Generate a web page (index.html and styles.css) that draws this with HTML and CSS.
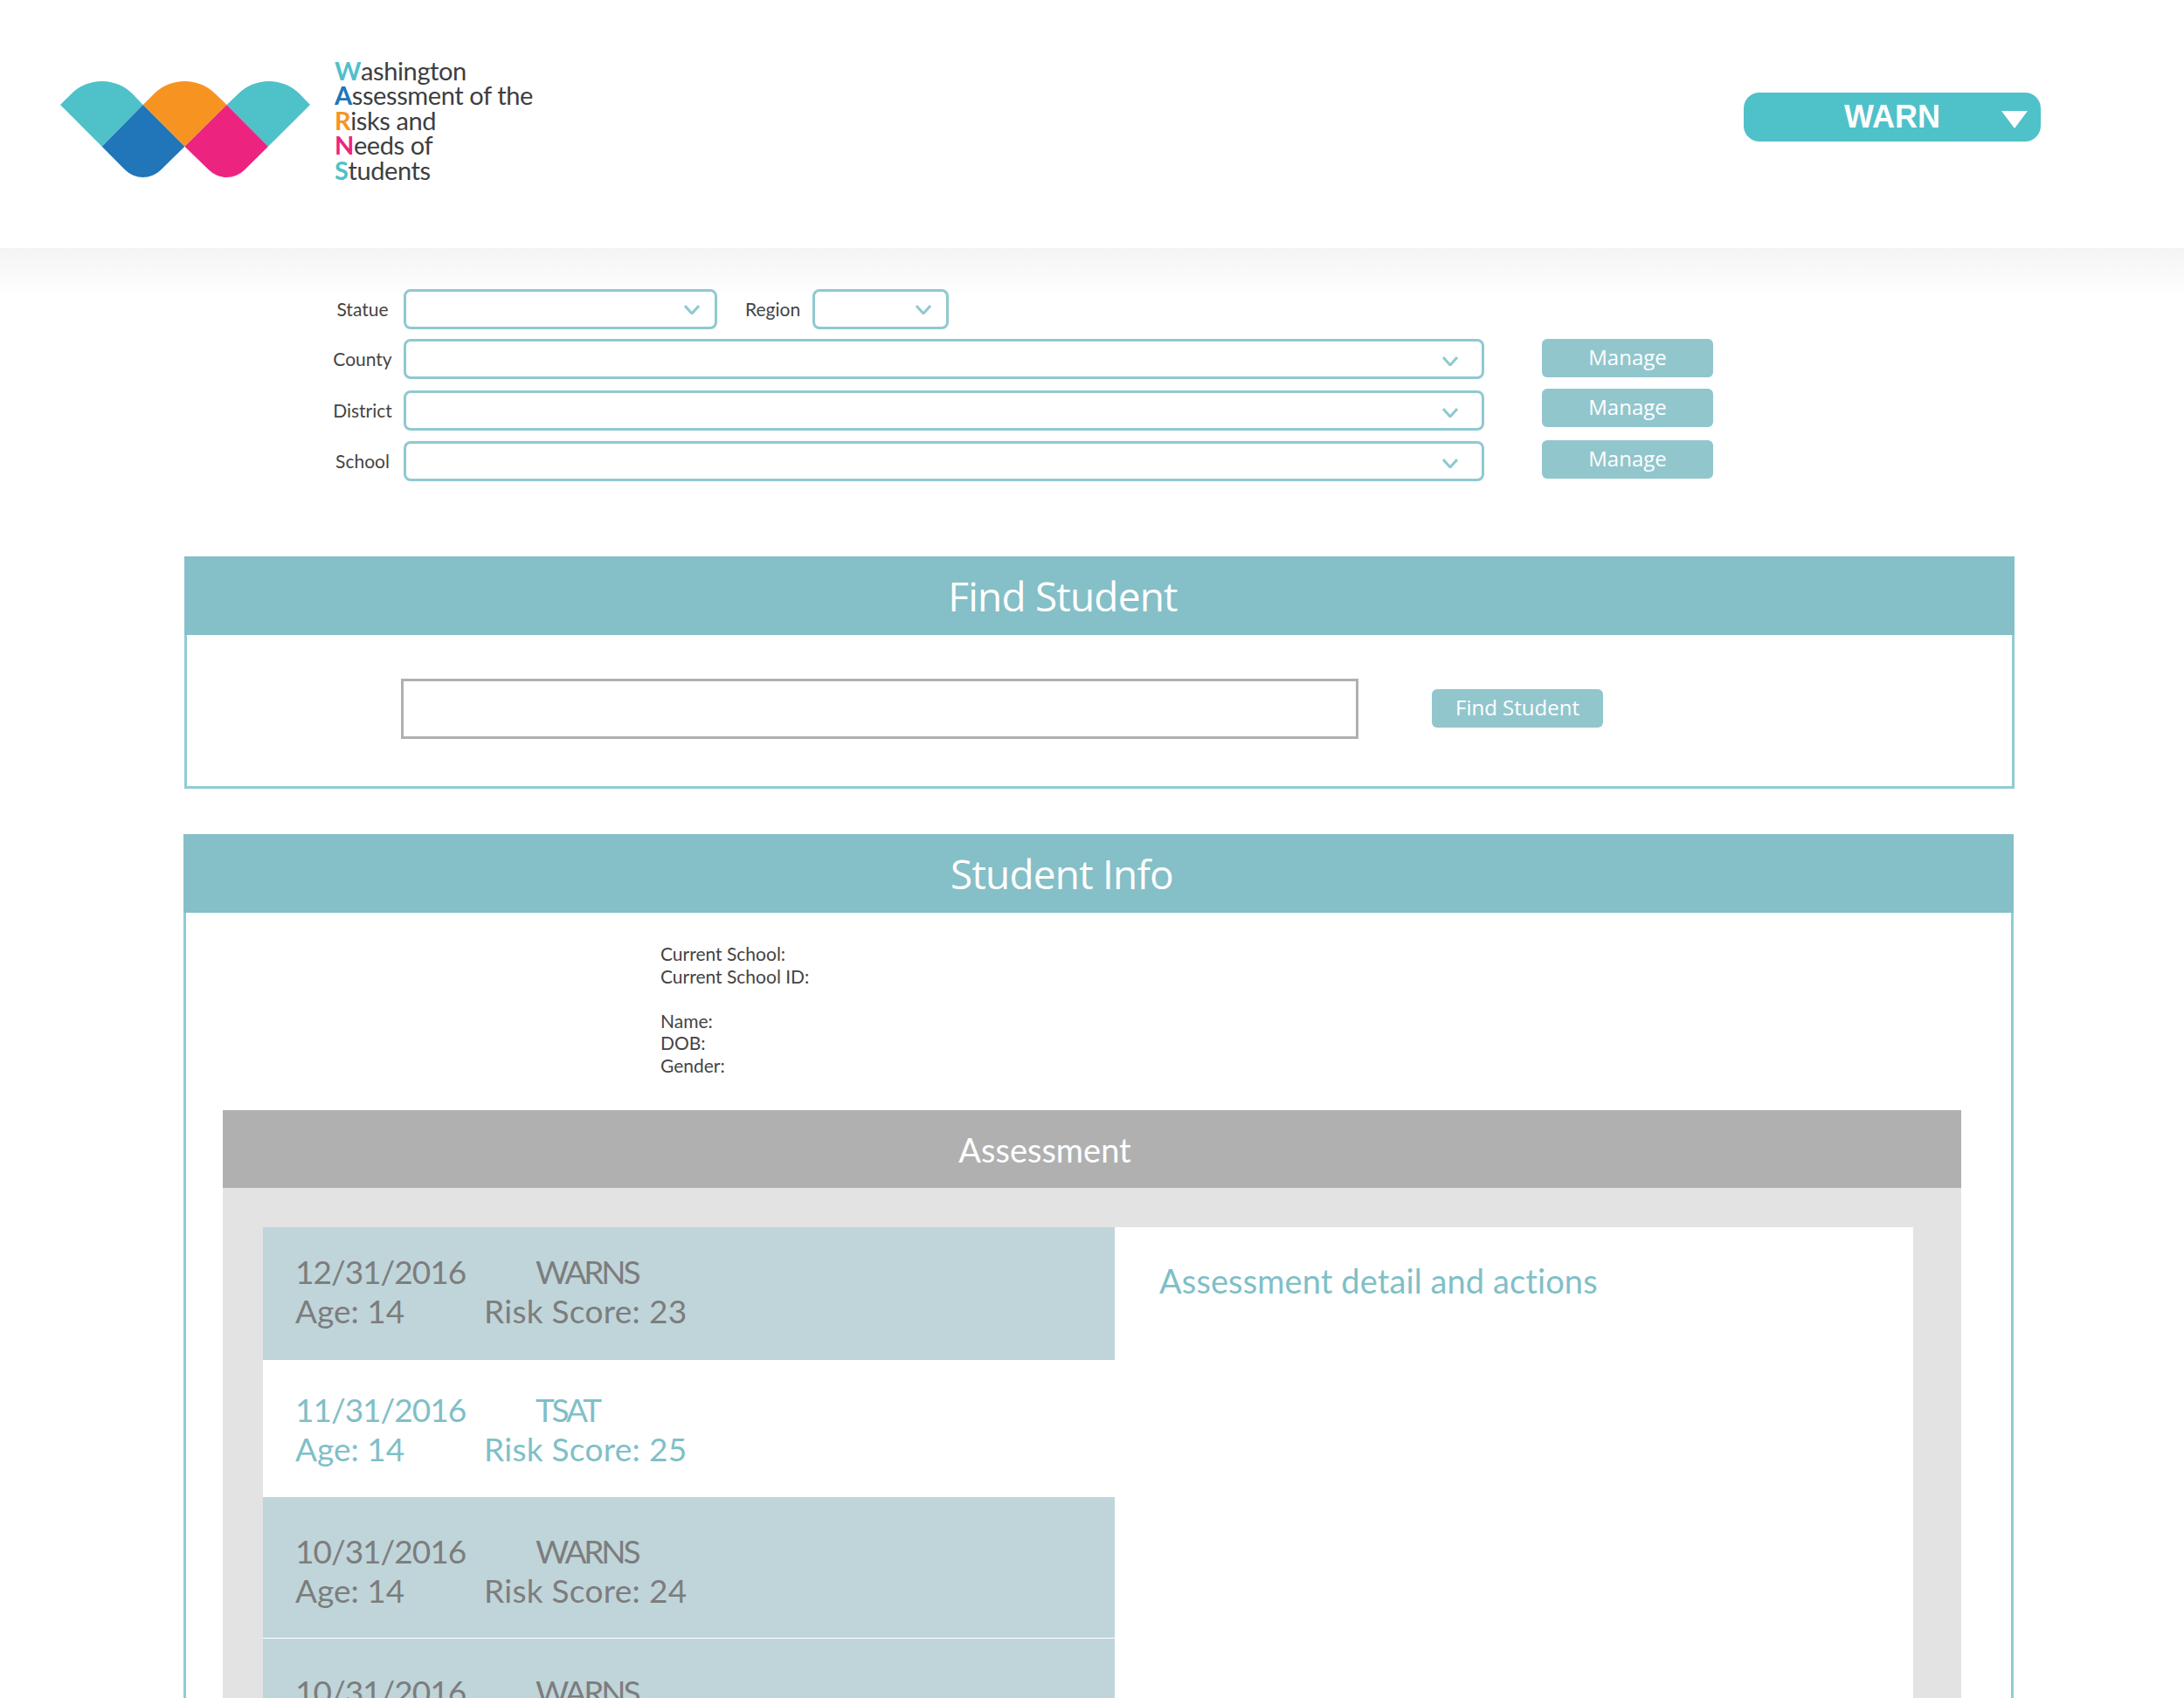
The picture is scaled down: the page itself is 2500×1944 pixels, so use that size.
FILE: index.html
```html
<!DOCTYPE html>
<html lang="en">

<head>
    <title>WARNS</title>
    <meta charset="UTF-8">
    <link rel="stylesheet" href="styles.css">
</head>

<body>
    <header class="top">
        <div class="brand">
            <svg class="brand-mark" viewBox="68 92 288 112" width="288" height="112">
                <path fill="#4fc1c9" d="M69 120L81.3 107.7A50 50 0 0 1 152 107.7L163.7 120L116.7 167.7Z" />
                <path fill="#f79421" d="M163.7 120L176 107.7A50 50 0 0 1 246.8 107.7L259.6 120L211.4 167.7Z" />
                <path fill="#4fc1c9" d="M259.6 120L272.4 107.7A50 50 0 0 1 343.2 107.7L355 120L307 167.7Z" />
                <path fill="#2175b9" d="M163.7 120L211.4 167.7L184.2 194.5A29 29 0 0 1 143.2 194.5L116.7 167.7Z" />
                <path fill="#ec2480" d="M259.6 120L307 167.7L280 194.5A29 29 0 0 1 239 194.5L211.4 167.7Z" />
            </svg>
            <div class="brand-name">
                <div><b class="cyan">W</b>ashington</div>
                <div><b class="blue">A</b>ssessment of the</div>
                <div><b class="orange">R</b>isks and</div>
                <div><b class="pink">N</b>eeds of</div>
                <div><b class="cyan">S</b>tudents</div>
            </div>
        </div>
        <div class="app-switch">
            WARN
            <span class="app-switch-arrow"></span>
        </div>
    </header>

    <section class="filters">
        <div class="filter-row">
            <label class="filter-label">Statue</label>
            <div class="picker picker-state">
                <svg class="chevron" viewBox="0 0 18 11"><path d="M1 1L9 10L17 1" /></svg>
            </div>
            <label class="filter-label-inline">Region</label>
            <div class="picker picker-region">
                <svg class="chevron" viewBox="0 0 18 11"><path d="M1 1L9 10L17 1" /></svg>
            </div>
        </div>
        <div class="filter-row filter-row-county">
            <label class="filter-label">County</label>
            <div class="picker picker-wide">
                <svg class="chevron" viewBox="0 0 18 11"><path d="M1 1L9 10L17 1" /></svg>
            </div>
            <button class="btn btn-manage">Manage</button>
        </div>
        <div class="filter-row filter-row-district">
            <label class="filter-label">District</label>
            <div class="picker picker-wide">
                <svg class="chevron" viewBox="0 0 18 11"><path d="M1 1L9 10L17 1" /></svg>
            </div>
            <button class="btn btn-manage">Manage</button>
        </div>
        <div class="filter-row filter-row-school">
            <label class="filter-label">School</label>
            <div class="picker picker-wide">
                <svg class="chevron" viewBox="0 0 18 11"><path d="M1 1L9 10L17 1" /></svg>
            </div>
            <button class="btn btn-manage">Manage</button>
        </div>
    </section>

    <section class="panel panel-find">
        <h2 class="panel-title">Find Student</h2>
        <div class="find-body">
            <div class="find-input"></div>
            <button class="btn btn-find">Find Student</button>
        </div>
    </section>

    <section class="panel panel-info">
        <h2 class="panel-title">Student Info</h2>
        <div class="info-text">
            <div>Current School:</div>
            <div>Current School ID:</div>
            <br>
            <div>Name:</div>
            <div>DOB:</div>
            <div>Gender:</div>
        </div>
        <div class="assessment">
            <h3 class="assessment-title">Assessment</h3>
            <div class="assessment-body">
                <div class="assessment-list">
                    <div class="item item-one">
                        <div class="item-line"><span class="item-date">12/31/2016</span><span class="item-type">WARNS</span></div>
                        <div class="item-line"><span class="item-age">Age: 14</span><span class="item-score">Risk Score: 23</span></div>
                    </div>
                    <div class="item item-active">
                        <div class="item-line"><span class="item-date">11/31/2016</span><span class="item-type">TSAT</span></div>
                        <div class="item-line"><span class="item-age">Age: 14</span><span class="item-score">Risk Score: 25</span></div>
                    </div>
                    <div class="item item-three">
                        <div class="item-line"><span class="item-date">10/31/2016</span><span class="item-type">WARNS</span></div>
                        <div class="item-line"><span class="item-age">Age: 14</span><span class="item-score">Risk Score: 24</span></div>
                    </div>
                    <div class="item item-four">
                        <div class="item-line"><span class="item-date">10/31/2016</span><span class="item-type">WARNS</span></div>
                        <div class="item-line"><span class="item-age">Age: 14</span><span class="item-score">Risk Score: 24</span></div>
                    </div>
                </div>
                <div class="assessment-detail">Assessment detail and actions</div>
            </div>
        </div>
    </section>
</body>

</html>
```

FILE: styles.css
```css
html, body {
    height: 1944px;
    overflow: hidden;
}

body {
    margin: 0;
    background: #fff;
    color: #444;
    font-family: "Lato", "Open Sans", sans-serif;
}

h2, h3 {
    margin: 0;
    font-weight: normal;
}

/* top bar */
.top {
    height: 284px;
    box-sizing: border-box;
    display: flex;
    justify-content: space-between;
    padding: 67px 164px 0 68px;
}

.brand {
    display: flex;
    align-items: flex-start;
}

.brand-mark {
    margin-top: 25px;
}

.brand-name {
    margin-left: 27px;
    font-size: 29px;
    letter-spacing: -.4px;
    line-height: 28.4px;
    color: #3e3e3f;
}

.cyan { color: #4fc1c9; }
.blue { color: #2175b9; }
.orange { color: #f79421; }
.pink { color: #ec2480; }

.app-switch {
    position: relative;
    width: 340px;
    height: 56px;
    margin-top: 39px;
    border-radius: 18px;
    background: #4fc1c9;
    color: #fff;
    font: bold 36px/56px "Liberation Sans", sans-serif;
    text-align: center;
}

.app-switch-arrow {
    position: absolute;
    right: 15px;
    top: 21px;
    border-left: 15px solid transparent;
    border-right: 15px solid transparent;
    border-top: 20px solid #fff;
}

/* filters */
.filters {
    height: 353px;
    box-sizing: border-box;
    padding: 47px 0 0 380px;
    background: linear-gradient(#f4f4f4, #fff 56px);
}

.filter-row {
    display: flex;
    align-items: flex-start;
}

.filter-row-county { margin-top: 11px; }
.filter-row-district { margin-top: 13px; }
.filter-row-school { margin-top: 12px; }

.filter-label {
    width: 70px;
    margin-right: 12px;
    font-size: 21px;
    line-height: 46px;
    text-align: center;
}

.filter-label-inline {
    margin: 0 14px 0 32px;
    font-size: 21px;
    line-height: 46px;
}

.picker {
    height: 46px;
    box-sizing: border-box;
    border: 3px solid #8fc9d1;
    border-radius: 8px;
    background: #fff;
    display: flex;
    align-items: center;
    justify-content: flex-end;
}

.picker-state {
    width: 359px;
    padding-right: 17px;
}

.picker-region {
    width: 156px;
    padding-right: 17px;
}

.picker-wide {
    width: 1237px;
    padding-right: 27px;
}

.picker-wide .chevron {
    margin-top: 4px;
}

.chevron {
    width: 18px;
    height: 11px;
    fill: none;
    stroke: #8fc9d1;
    stroke-width: 3;
}

.btn {
    width: 196px;
    height: 44px;
    padding: 0 0 3px;
    border: 0;
    border-radius: 6px;
    background: #92c6cd;
    color: #fff;
    font-family: "Open Sans", sans-serif;
    font-size: 24px;
}

.btn-manage {
    margin-left: 66px;
}

.btn-find {
    margin-bottom: 2px;
}

.filter-row-district .btn-manage { margin-top: -2px; }
.filter-row-school .btn-manage { margin-top: -1px; }

/* panels */
.panel {
    box-sizing: border-box;
    width: 2095px;
    margin-left: 211px;
    border: 3px solid #8fccd4;
    border-top: 0;
}

.panel-title {
    margin: 0 -3px;
    height: 90px;
    padding-right: 84px;
    background: #85bfc7;
    color: #fff;
    font-family: "Open Sans", sans-serif;
    font-size: 46px;
    letter-spacing: -.8px;
    line-height: 90px;
    text-align: center;
}

.panel-find {
    height: 266px;
}

.find-body {
    display: flex;
    align-items: center;
    padding: 50px 0 0 245px;
}

.find-input {
    width: 1096px;
    height: 69px;
    box-sizing: border-box;
    border: 3px solid #b0b0b0;
    margin-right: 84px;
}

.panel-info {
    margin-top: 52px;
    margin-left: 210px;
    height: 1100px;
}

.info-text {
    padding: 34px 0 0 543px;
    font-size: 21px;
    line-height: 25.6px;
}

.assessment {
    margin: 38px 0 0 42px;
    width: 1990px;
}

.assessment-title {
    height: 89px;
    padding-right: 108px;
    background: #b0b0b0;
    color: #fff;
    font-size: 38px;
    line-height: 90px;
    text-align: center;
}

.assessment-body {
    display: flex;
    padding: 45px 55px 0 46px;
    background: #e3e3e3;
    height: 600px;
}

.assessment-list {
    width: 975px;
    background: #fff;
}

.assessment-detail {
    flex: 1;
    padding: 38px 0 0 51px;
    background: #fff;
    color: #7fbfc8;
    font-size: 38px;
    letter-spacing: .1px;
}

.item {
    box-sizing: border-box;
    padding-left: 37px;
    background: #bfd5da;
    color: #7d7d7d;
    font-size: 37px;
    line-height: 45px;
}

.item-one {
    height: 152px;
    padding-top: 28px;
}

.item-active {
    height: 157px;
    padding-top: 34px;
    background: #fff;
    color: #7fbfc8;
}

.item-three {
    height: 162px;
    padding-top: 39px;
    border-bottom: 1px solid #fff;
}

.item-four {
    height: 160px;
    padding-top: 38px;
}

.item-line {
    display: flex;
}

.item-date {
    width: 276px;
    letter-spacing: -1px;
}

.item-type {
    margin-left: -1px;
    letter-spacing: -3.2px;
}

.item-age {
    width: 216px;
}

.item-score {
    letter-spacing: .3px;
}
```
